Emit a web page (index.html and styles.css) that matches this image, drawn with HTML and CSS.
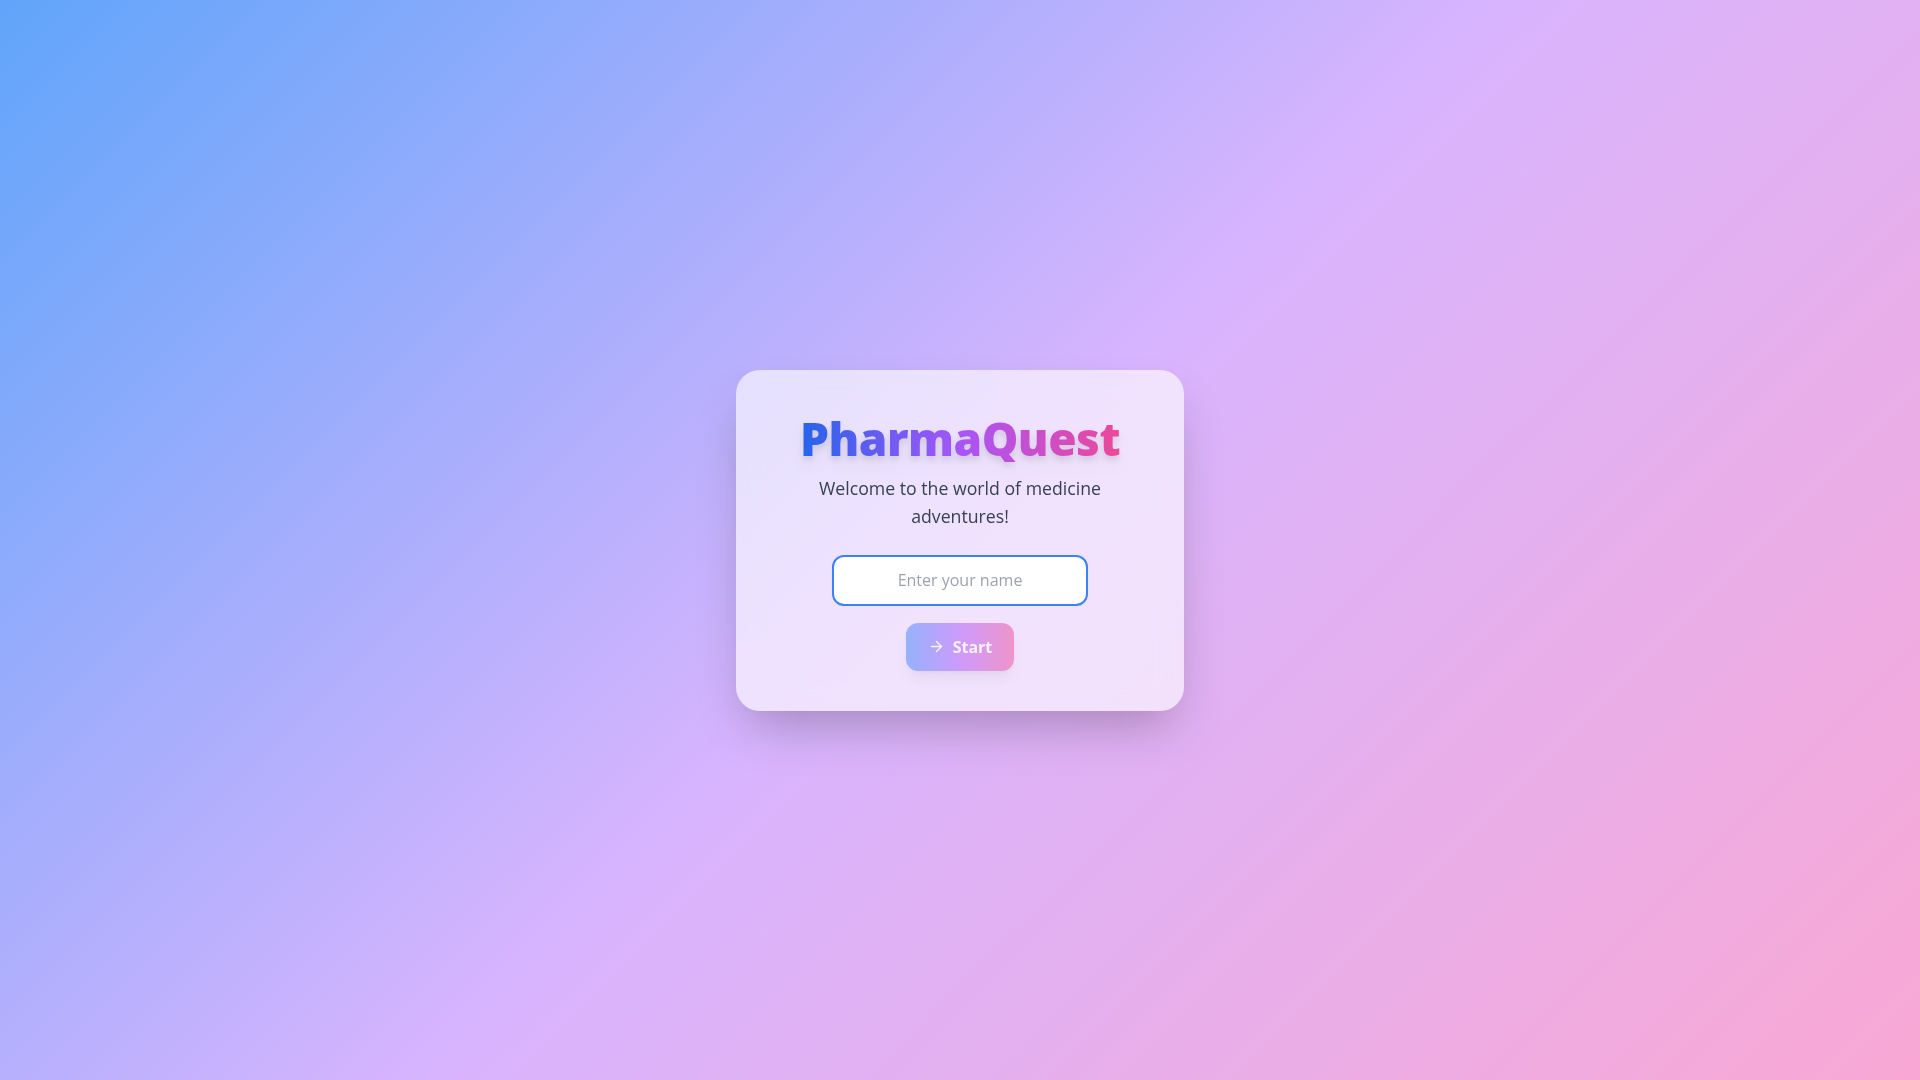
FILE: index.html
```html
<!DOCTYPE html>
<html lang="en">
<head>
<meta charset="utf-8">
<title>PharmaQuest</title>
<link rel="stylesheet" href="styles.css">
</head>
<body>
<main class="screen">
  <section class="card">
    <h1 class="title">PharmaQuest</h1>
    <p class="subtitle">Welcome to the world of medicine adventures!</p>
    <input class="name-input" type="text" placeholder="Enter your name" autofocus>
    <button class="start-btn" type="button" disabled>
      <svg class="icon" viewBox="0 0 24 24" width="17" height="17" fill="none" stroke="currentColor" stroke-width="2" stroke-linecap="round" stroke-linejoin="round"><path d="M5 12h14"/><path d="m12 5 7 7-7 7"/></svg>
      <span>Start</span>
    </button>
  </section>
</main>
</body>
</html>
```

FILE: styles.css
```css
* { box-sizing: border-box; }
html, body { margin: 0; padding: 0; height: 100%; }
body {
  font-family: "Open Sans", "Noto Sans", "Liberation Sans", sans-serif;
}
.screen {
  min-height: 100vh;
  display: flex;
  align-items: center;
  justify-content: center;
  background: linear-gradient(135deg, #60a5fa 0%, #d8b4fe 50%, #f9a8d4 100%);
}
.card {
  width: 448px;
  padding: 40px 32px;
  border-radius: 24px;
  background: rgba(255, 255, 255, 0.62);
  backdrop-filter: blur(12px);
  box-shadow: 0 25px 50px -12px rgba(0, 0, 0, 0.25);
  display: flex;
  flex-direction: column;
  align-items: center;
  text-align: center;
}
.title {
  margin: 4px 0 12px;
  font-size: 46px;
  line-height: 48px;
  font-weight: 800;
  letter-spacing: -0.5px;
  background: linear-gradient(90deg, #2563eb, #a855f7, #ec4899);
  -webkit-background-clip: text;
  background-clip: text;
  color: transparent;
  filter: drop-shadow(0 10px 8px rgba(0,0,0,0.04)) drop-shadow(0 4px 3px rgba(0,0,0,0.1));
}
.subtitle {
  margin: 0 0 25px;
  max-width: 300px;
  font-size: 17.7px;
  line-height: 28px;
  font-weight: 500;
  color: #374151;
}
.name-input {
  width: 256px;
  height: 51px;
  border: 2px solid #3b82f6;
  border-radius: 12px;
  background: #fff;
  outline: none;
  text-align: center;
  font-family: inherit;
  font-size: 16px;
  color: #111827;
  margin-bottom: 17px;
}
.name-input::placeholder { color: #9ca3af; }
.start-btn {
  display: flex;
  align-items: center;
  gap: 8px;
  height: 48px;
  padding: 0 22px;
  border: none;
  border-radius: 12px;
  background: linear-gradient(90deg, #3b82f6, #a855f7, #ec4899);
  color: #fff;
  font-family: inherit;
  font-size: 16px;
  font-weight: 700;
  opacity: 0.5;
  box-shadow: 0 10px 15px -3px rgba(0,0,0,0.1), 0 4px 6px -4px rgba(0,0,0,0.1);
}
.icon { display: block; }
```
